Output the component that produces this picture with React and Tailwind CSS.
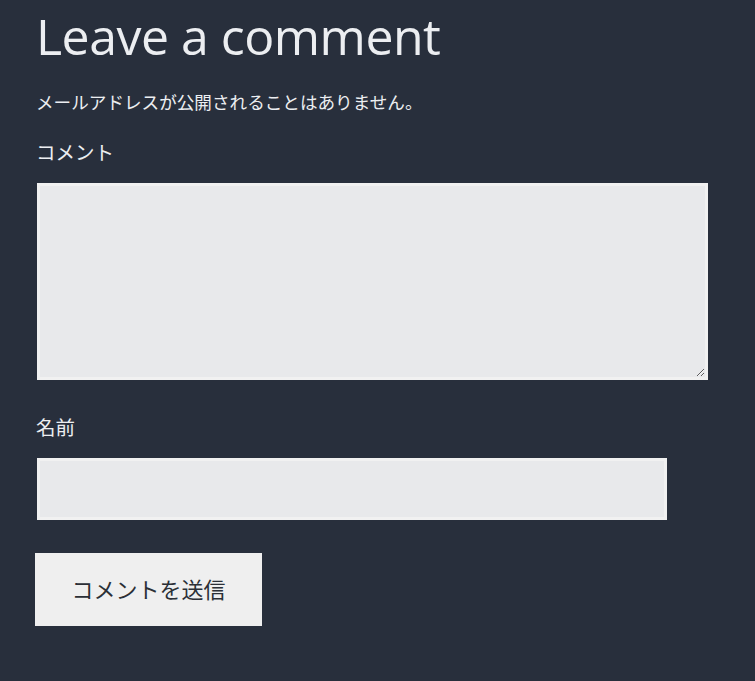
import React from 'react';

const jp = { fontFamily: '"Open Sans", "Noto Sans CJK JP", sans-serif' };

export default function App() {
  return (
    <div className="min-h-[681px] w-[755px] bg-[#282f3c] pl-[36px] text-[#eceef1]" style={jp}>
      <h2 className="pt-[4px] text-[50px] leading-[64px] font-normal tracking-[-0.5px]">Leave a comment</h2>
      <p className="mt-[20px] text-[17.6px] leading-[28px]">メールアドレスが公開されることはありません。</p>
      <form className="mt-[23px] flex flex-col">
        <label className="text-[19.5px] leading-[28px]">コメント</label>
        <textarea
          className="mt-[16px] ml-px h-[197px] w-[671px] border-[3px] border-[#f1f1f1] bg-[#e8e9eb] outline-none"
        />
        <label className="mt-[34px] text-[19.5px] leading-[28px]">名前</label>
        <input
          type="text"
          className="mt-[16px] ml-px h-[62px] w-[630px] border-[3px] border-[#f1f1f1] bg-[#e8e9eb] outline-none"
        />
        <button
          type="submit"
          className="mt-[33px] -ml-px h-[73px] w-[227px] bg-[#efefef] text-[22px] text-[#2b2f36]"
        >
          コメントを送信
        </button>
      </form>
    </div>
  );
}
